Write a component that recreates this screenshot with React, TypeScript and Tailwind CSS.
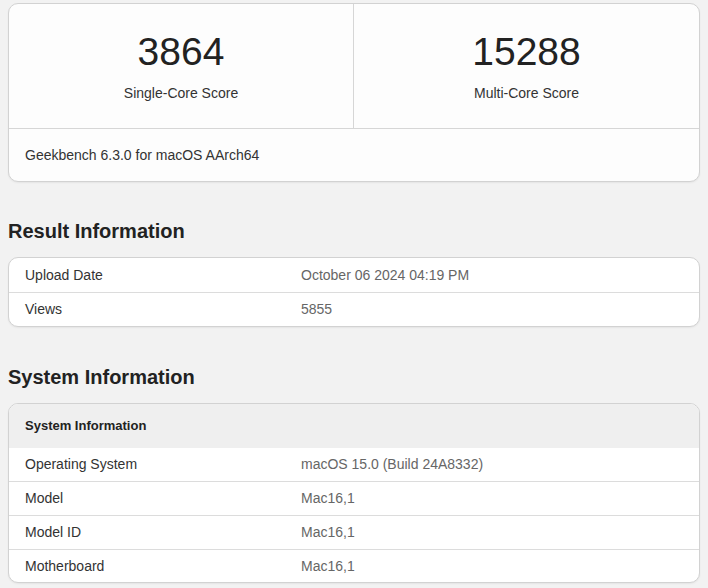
export default function App() {
  const result = [
    ["Upload Date", "October 06 2024 04:19 PM"],
    ["Views", "5855"],
  ];
  const system = [
    ["Operating System", "macOS 15.0 (Build 24A8332)"],
    ["Model", "Mac16,1"],
    ["Model ID", "Mac16,1"],
    ["Motherboard", "Mac16,1"],
  ];

  return (
    <div className="min-h-[588px] bg-[#f2f2f2] px-2 pt-[3px] font-[family-name:Liberation_Sans,Arial,sans-serif] text-[14px] text-[#333]">
      <div className="rounded-[10px] border border-[#d2d2d2] bg-[#fdfdfd] shadow-[0_1px_2px_rgba(0,0,0,0.06)]">
        <div className="grid h-[125px] grid-cols-2 border-b border-[#d6d6d6]">
          <div className="flex flex-col items-center border-r border-[#d6d6d6] pt-[26px]">
            <div className="text-[39px] leading-[44px] text-[#222]">3864</div>
            <div className="mt-[10px] leading-[18px]">Single-Core Score</div>
          </div>
          <div className="flex flex-col items-center pt-[26px]">
            <div className="text-[39px] leading-[44px] text-[#222]">15288</div>
            <div className="mt-[10px] leading-[18px]">Multi-Core Score</div>
          </div>
        </div>
        <div className="flex h-[52px] items-center px-4 pt-[1px]">Geekbench 6.3.0 for macOS AArch64</div>
      </div>

      <h2 className="mt-[37px] text-[20px] font-bold leading-[24px] text-[#222]">Result Information</h2>
      <div className="mt-[14px] overflow-hidden rounded-[10px] border border-[#d2d2d2] bg-white shadow-[0_1px_2px_rgba(0,0,0,0.06)]">
        {result.map(([k, v], i) => (
          <div key={k} className={`grid h-[34px] grid-cols-[40%_60%] items-center ${i > 0 ? "border-t border-[#dcdcdc]" : ""}`}>
            <div className="px-4">{k}</div>
            <div className="px-4 text-[#666]">{v}</div>
          </div>
        ))}
      </div>

      <h2 className="mt-[38px] text-[20px] font-bold leading-[24px] text-[#222]">System Information</h2>
      <div className="mt-[14px] overflow-hidden rounded-[10px] border border-[#d2d2d2] bg-white shadow-[0_1px_2px_rgba(0,0,0,0.06)]">
        <div className="flex h-[44px] items-center bg-[#efefef] px-4 text-[13px] font-bold text-[#222]">System Information</div>
        {system.map(([k, v], i) => (
          <div key={k} className={`grid grid-cols-[40%_60%] items-center ${i === 0 || i === 3 ? "h-[33px]" : "h-[34px]"} ${i > 0 ? "border-t border-[#dcdcdc]" : ""}`}>
            <div className="px-4">{k}</div>
            <div className="px-4 text-[#666]">{v}</div>
          </div>
        ))}
      </div>
    </div>
  );
}
